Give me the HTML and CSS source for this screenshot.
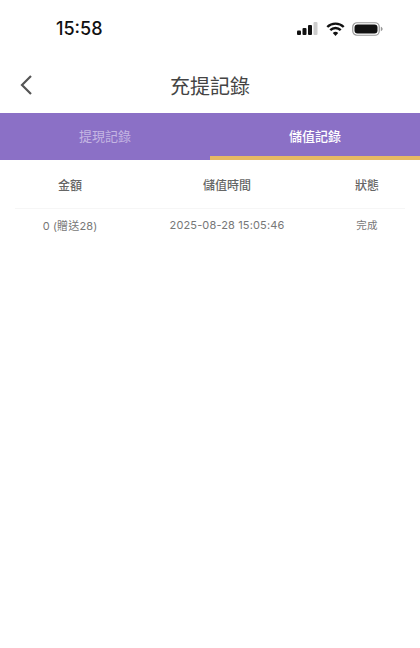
FILE: index.html
```html
<!DOCTYPE html>
<html lang="zh-Hant">
<head>
    <meta charset="UTF-8">
    <meta name="viewport" content="width=device-width, initial-scale=1.0">
    <title>充提記錄</title>
    <link rel="stylesheet" href="styles.css">
</head>
<body>
    <div class="status-bar">
        <span class="status-time">15:58</span>
        <div class="status-icons">
            <svg class="icon-signal" width="21" height="13" viewBox="0 0 21 13">
                <rect x="0" y="8.5" width="4" height="4.5" rx="1" fill="#111"/>
                <rect x="5.5" y="6" width="4" height="7" rx="1" fill="#111"/>
                <rect x="11" y="3" width="4" height="10" rx="1" fill="#111"/>
                <rect x="16.5" y="0" width="4" height="13" rx="1" fill="#ccc"/>
            </svg>
            <svg class="icon-wifi" width="19" height="14" viewBox="0 0 18 14">
                <path d="M0.8 5 A11.6 11.6 0 0 1 17.2 5" fill="none" stroke="#111" stroke-width="2.4"/>
                <path d="M3.8 8.2 A7.3 7.3 0 0 1 14.2 8.2" fill="none" stroke="#111" stroke-width="2.4"/>
                <path d="M9 14 L6.3 11 A4 4 0 0 1 11.7 11 Z" fill="#111"/>
            </svg>
            <svg class="icon-battery" width="31" height="14" viewBox="0 0 31 14">
                <rect x="0.75" y="0.75" width="26.5" height="12.5" rx="4.2" fill="none" stroke="#999" stroke-width="1.2"/>
                <rect x="2.5" y="2.5" width="23" height="9" rx="3" fill="#111"/>
                <path d="M28.8 4.8 C30 5.2 30.6 6 30.6 7 C30.6 8 30 8.8 28.8 9.2 Z" fill="#999"/>
            </svg>
        </div>
    </div>

    <div class="nav-bar">
        <svg class="back-icon" width="14" height="22" viewBox="0 0 14 22">
            <path d="M12 2 L3 11 L12 20" fill="none" stroke="#555" stroke-width="2.2"/>
        </svg>
        <h1 class="nav-title">充提記錄</h1>
    </div>

    <div class="tabs">
        <div class="tab">提現記錄</div>
        <div class="tab tab-active">儲值記錄</div>
    </div>

    <div class="records">
        <div class="row row-head">
            <div class="col-amount">金額</div>
            <div class="col-time">儲值時間</div>
            <div class="col-state">狀態</div>
        </div>
        <div class="row row-data">
            <div class="col-amount">0 (贈送28)</div>
            <div class="col-time">2025-08-28 15:05:46</div>
            <div class="col-state">完成</div>
        </div>
    </div>
</body>
</html>
```

FILE: styles.css
```css
body {
    margin: 0;
    width: 420px;
    height: 648px;
    overflow: hidden;
    background-color: white;
    font-family: "Inter", "Noto Sans CJK TC", sans-serif;
}
.status-bar {
    display: flex;
    justify-content: space-between;
    align-items: center;
    height: 57px;
    padding: 0 37px 0 56px;
}
.status-time {
    font-size: 18px;
    font-weight: 500;
    color: #111;
}
.status-icons {
    display: flex;
    align-items: center;
    gap: 7px;
}
.icon-signal {
    margin-right: 1px;
}
.nav-bar {
    display: flex;
    align-items: center;
    justify-content: center;
    position: relative;
    height: 56px;
}
.back-icon {
    position: absolute;
    left: 19px;
    top: 17px;
}
.nav-title {
    margin: 0;
    font-size: 20px;
    font-weight: 400;
    color: #444;
}
.tabs {
    display: flex;
    height: 47px;
    background-color: #8b70c6;
}
.tab {
    flex: 1;
    text-align: center;
    line-height: 47px;
    font-size: 13px;
    color: #c5b6e3;
}
.tab-active {
    box-sizing: border-box;
    color: white;
    font-weight: 500;
    border-bottom: 4px solid #e6b964;
}
.records {
    padding: 0 15px;
}
.row {
    display: flex;
    align-items: center;
}
.row-head {
    height: 48px;
    font-size: 12px;
    font-weight: 500;
    color: #666;
    border-bottom: 1px solid #f6f6f6;
}
.row-data {
    height: 31px;
    font-size: 11px;
    letter-spacing: 0.14px;
    color: #777;
}
.col-amount {
    width: 110px;
    text-align: center;
}
.col-time {
    flex: 1;
    text-align: center;
}
.col-state {
    width: 76px;
    text-align: center;
    font-size: 10.5px;
}
.row-head .col-state {
    font-size: 12px;
}
```
